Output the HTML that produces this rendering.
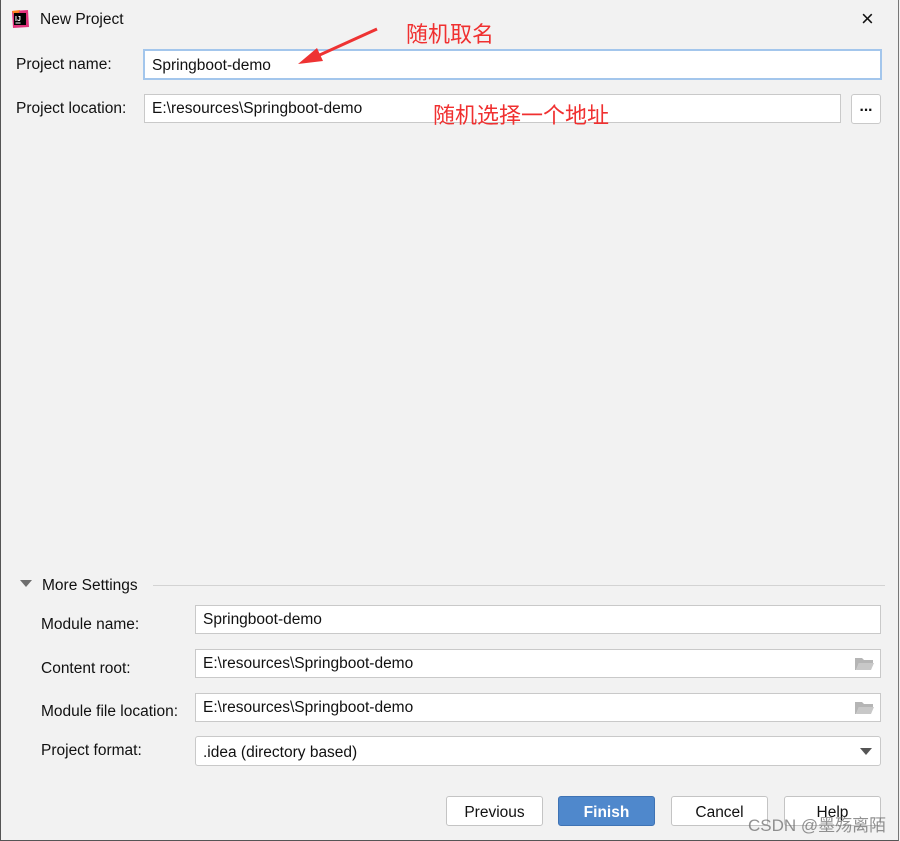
<!DOCTYPE html>
<html><head><meta charset="utf-8"><style>
*{margin:0;padding:0;box-sizing:border-box}
body{width:900px;height:841px;background:#f2f2f2;position:relative;overflow:hidden;font-family:"Liberation Sans","Noto Sans CJK SC",sans-serif;font-size:15.5px;color:#111}
.frame{position:absolute;left:0;top:0;width:899px;height:841px;border-left:1px solid #555;border-right:1px solid #777;border-bottom:1px solid #555}
.a{position:absolute;white-space:nowrap}
.in{position:absolute;background:#fff;border:1px solid #c9c9c9;padding-left:7px;line-height:28px;height:28px}
.btn{position:absolute;top:796px;height:30px;width:97px;border:1px solid #c4c4c4;border-radius:3px;background:#fff;text-align:center;line-height:31px}
.red{color:#f03030;font-size:22px;font-family:"Noto Sans CJK SC",sans-serif}
</style></head><body>
<div class="frame"></div>
<svg class="a" style="left:10px;top:9px" width="20" height="20" viewBox="0 0 20 20"><polygon points="2,2 18,1 19,18 3,19" fill="#e0337c"/><polygon points="2,2 10,1 6,10" fill="#fc801d"/><rect x="4" y="4" width="12" height="12" fill="#000"/><text x="5" y="12" font-size="7" fill="#fff" font-family="Liberation Sans" font-weight="bold">IJ</text><rect x="5.5" y="13.5" width="5" height="1" fill="#fff"/></svg>
<div class="a" style="left:40px;top:11px">New Project</div>
<div class="a" style="left:861px;top:6px;font-size:22px;font-weight:300">×</div>
<div class="a" style="left:16px;top:56px">Project name:</div>
<div class="in" style="left:143px;top:49px;width:739px;height:31px;border:2px solid #a3c6ec;line-height:29px">Springboot-demo</div>
<div class="a" style="left:16px;top:100px">Project location:</div>
<div class="in" style="left:144px;top:94px;width:697px;height:29px">E:\resources\Springboot-demo</div>
<div class="in" style="left:851px;top:94px;width:30px;height:30px;border-radius:3px;padding:0;text-align:center;line-height:24px;font-weight:bold">...</div>
<svg class="a" style="left:295px;top:26px" width="90" height="44"><line x1="82" y1="3" x2="18" y2="32" stroke="#ee3333" stroke-width="3"/><polygon points="3,38 22,22 28,35" fill="#ee3333"/></svg>
<div class="a red" style="left:406px;top:17px">随机取名</div>
<div class="a red" style="left:433px;top:98px">随机选择一个地址</div>
<svg class="a" style="left:20px;top:580px" width="12" height="8"><polygon points="0,0 12,0 6,7" fill="#6e6e6e"/></svg>
<div class="a" style="left:42px;top:577px">More Settings</div>
<div class="a" style="left:153px;top:585px;width:732px;height:1px;background:#d3d3d3"></div>
<div class="a" style="left:41px;top:616px">Module name:</div>
<div class="in" style="left:195px;top:605px;width:686px;height:29px">Springboot-demo</div>
<div class="a" style="left:41px;top:660px">Content root:</div>
<div class="in" style="left:195px;top:649px;width:686px;height:29px">E:\resources\Springboot-demo</div>
<div class="a" style="left:41px;top:703px">Module file location:</div>
<div class="in" style="left:195px;top:693px;width:686px;height:29px">E:\resources\Springboot-demo</div>
<svg class="a" style="left:855px;top:657px" width="19" height="14"><path d="M0 1h7l2 2h9v3H4L1 13H0z" fill="#b5b5b5"/><path d="M4 6h15l-3 7H1z" fill="#c8c8c8"/></svg>
<svg class="a" style="left:855px;top:701px" width="19" height="14"><path d="M0 1h7l2 2h9v3H4L1 13H0z" fill="#b5b5b5"/><path d="M4 6h15l-3 7H1z" fill="#c8c8c8"/></svg>
<div class="a" style="left:41px;top:742px">Project format:</div>
<div class="in" style="left:195px;top:736px;width:686px;height:30px;border-radius:3px;line-height:32px">.idea (directory based)</div>
<svg class="a" style="left:860px;top:748px" width="12" height="8"><polygon points="0,0 12,0 6,7" fill="#555"/></svg>
<div class="btn" style="left:446px">Previous</div>
<div class="btn" style="left:558px;background:#4f88cc;border-color:#3f73b4;color:#fff;font-weight:bold">Finish</div>
<div class="btn" style="left:671px">Cancel</div>
<div class="btn" style="left:784px">Help</div>
<div class="a" style="left:748px;top:811px;color:rgba(110,110,110,0.75);font-size:17px;font-family:'Liberation Sans','Noto Sans CJK SC',sans-serif">CSDN @墨殇离陌</div>
</body></html>
